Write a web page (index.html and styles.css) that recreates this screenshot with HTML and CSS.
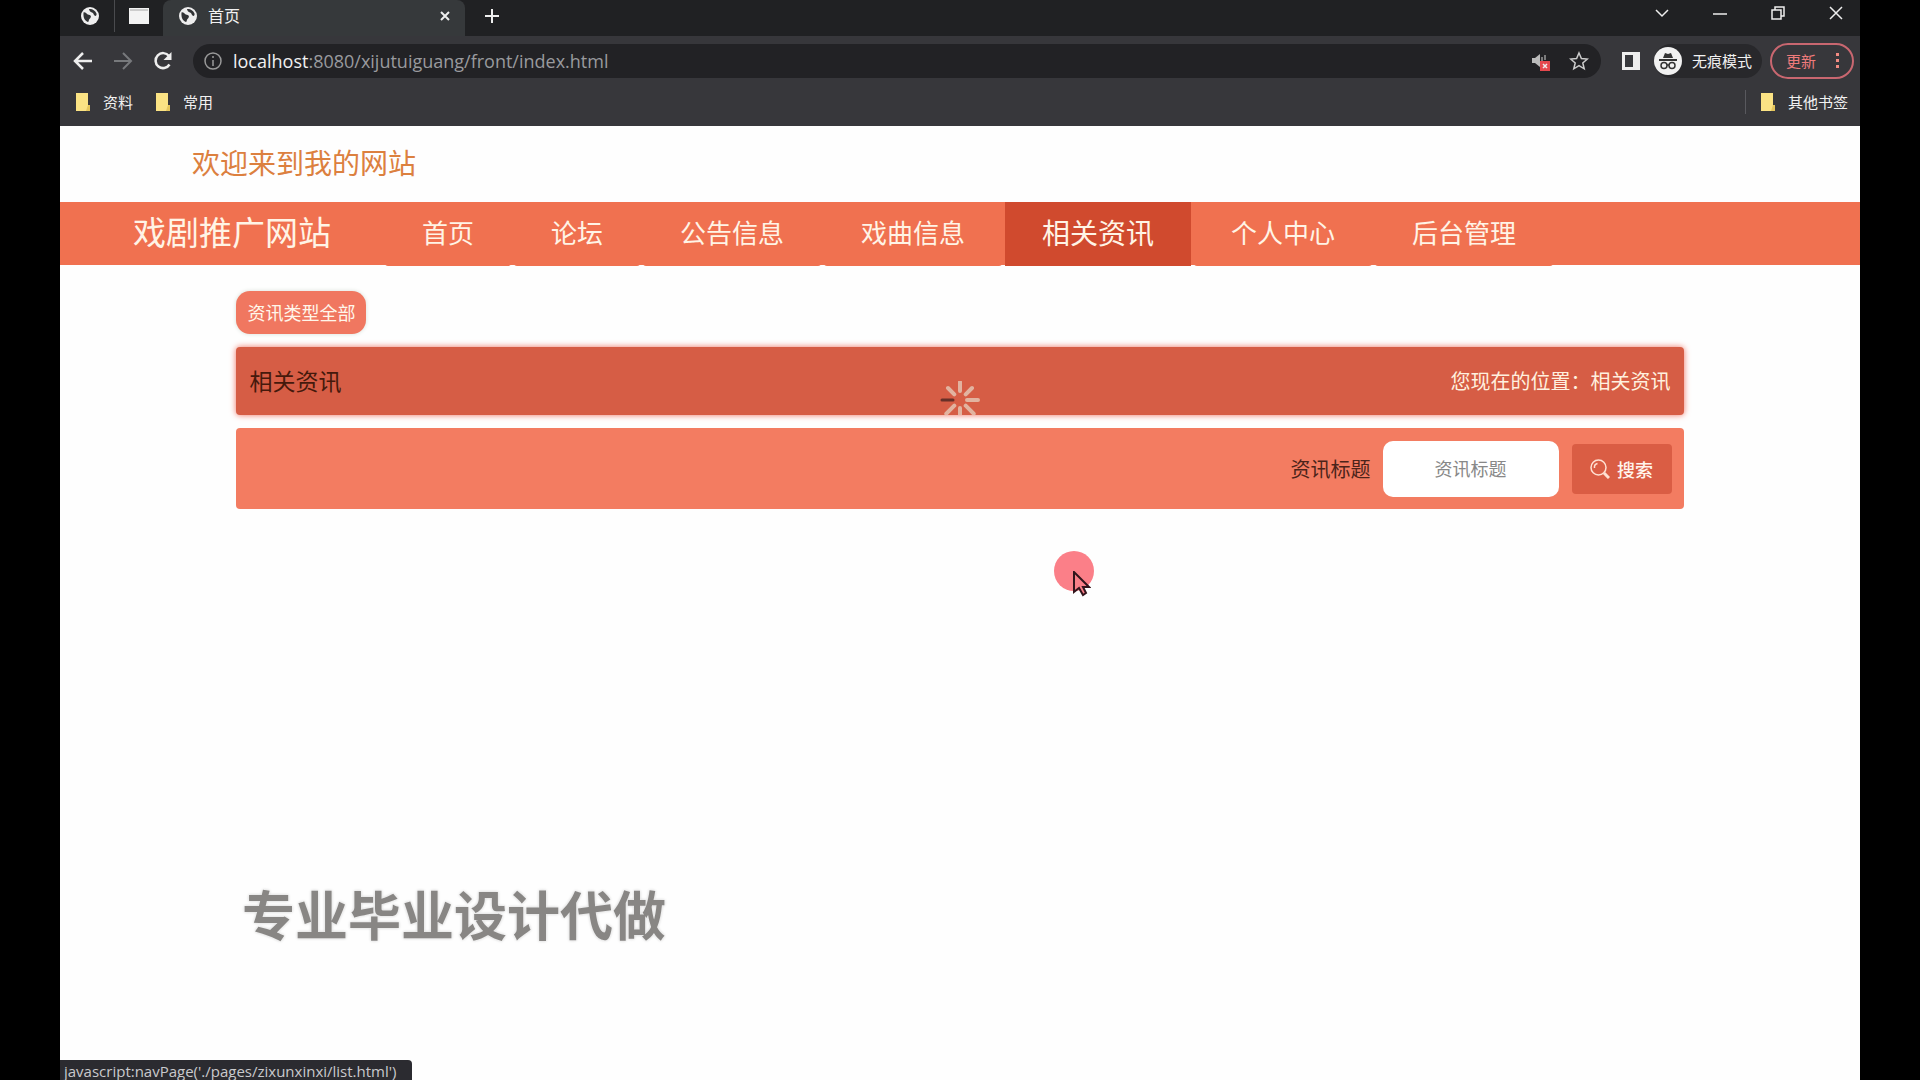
FILE: index.html
```html
<!DOCTYPE html>
<html lang="zh-CN">
<head>
<meta charset="utf-8">
<title>首页</title>
<link rel="stylesheet" href="styles.css">
</head>
<body>
<svg class="defs" aria-hidden="true">
  <symbol id="globe" viewBox="0 0 20 20"><circle cx="10" cy="10" r="9" fill="#eee"/><path d="M3.500 6.500c1.500-.5 2.500.5 3.500 1.500s2.500.5 3.500 1.500 0 2.500-1 3.500-.5 2.500-1.500 3C5 15 3 12 3.500 6.500zM9 3c3-.5 6 1 7.500 4.500.5 2-1 3-2 2s-1-2.500-2.500-3S9 4.500 9 3z" fill="#303234"/></symbol>
  <symbol id="folder" viewBox="0 0 16 18"><path d="M1 0h12v12h2v6H1z" fill="#fbe384"/><path d="M13 12h2v6h-4z" fill="#e5c65c"/></symbol>
</svg>
<div class="screen">
  <header class="browser">
    <div class="tabs">
      <button class="pinned" aria-label="固定标签页"><svg class="i20"><use href="#globe"/></svg></button>
      <button class="pinned second" aria-label="固定窗口"><svg class="i20" viewBox="0 0 20 20"><path d="M0 2h20v16H0z" fill="#f3f3f3"/><path d="M1 3h18v2H1z" fill="#ccc"/></svg></button>
      <div class="tab">
        <svg class="i20"><use href="#globe"/></svg><span>首页</span>
        <button class="close" aria-label="关闭标签页"><svg class="i12" viewBox="0 0 12 12"><path d="M2 2l8 8M10 2l-8 8" class="line"/></svg></button>
      </div>
      <button class="new" aria-label="新标签页"><svg class="i16" viewBox="0 0 16 16"><path d="M8 1v14M1 8h14" class="line"/></svg></button>
      <div class="window-controls">
        <button aria-label="搜索标签页"><svg class="i16" viewBox="0 0 16 16"><path d="M2 5l6 6 6-6" class="line thin"/></svg></button>
        <button aria-label="最小化"><svg class="i16" viewBox="0 0 16 16"><path d="M1 9h14" class="line thin"/></svg></button>
        <button aria-label="还原"><svg class="i16" viewBox="0 0 16 16"><path d="M2 5h9v9H2zM5 5V2h9v9h-3" class="line thin"/></svg></button>
        <button aria-label="关闭"><svg class="i16" viewBox="0 0 16 16"><path d="M2 2l12 12M14 2L2 14" class="line thin"/></svg></button>
      </div>
    </div>
    <div class="toolbar">
      <button aria-label="后退"><svg class="i20" viewBox="0 0 20 20"><path d="M19 10H3M10 2L2 10l8 8" class="line bold"/></svg></button>
      <button aria-label="前进"><svg class="i20" viewBox="0 0 20 20"><path d="M1 10h16M10 2l8 8-8 8" class="line dim"/></svg></button>
      <button aria-label="刷新"><svg class="i20" viewBox="0 0 20 20"><path d="M16.500 13.500A7.500 7.500 0 1 1 16 5" class="line bold"/><path d="M18.500 1v8h-8z" fill="#eee"/></svg></button>
      <div class="address">
        <svg class="i20" viewBox="0 0 20 20"><circle cx="10" cy="10" r="8" class="line gray"/><path d="M10 9v6M10 5v2" class="line gray"/></svg>
        <span class="url"><b>localhost</b>:8080/xijutuiguang/front/index.html</span>
        <button aria-label="已静音"><svg class="i20" viewBox="0 0 20 20"><path d="M1 7h3l5-4v13l-5-4H1z" fill="#bbb"/><path d="M11 6v4M14 4v5" stroke="#999" stroke-width="1.500"/><path d="M9 10h10v10H9z" fill="#e5484d"/><path d="M12 13l4 4M16 13l-4 4" class="line thin"/></svg></button>
        <button aria-label="收藏"><svg class="i20" viewBox="0 0 20 20"><path d="M10 2l2.400 5.500 6 .5-4.600 4 1.400 5.800L10 14.700l-5.200 3.100L6.200 12 1.600 8l6-.5z" class="line star"/></svg></button>
      </div>
      <button class="panel" aria-label="侧边栏"><svg class="i20" viewBox="0 0 20 20"><path d="M1 1h18v18H1z" fill="#eee"/><path d="M4 4h8v12H4z" fill="#37383c"/></svg></button>
      <div class="incognito"><svg class="i28" viewBox="0 0 28 28"><circle cx="14" cy="14" r="14" fill="#f1f1f1"/><path d="M9 11l2-5 3 1 3-1 2 5zM5 12h18v2H5z" fill="#333"/><circle cx="10" cy="18.500" r="3" class="glass"/><circle cx="18" cy="18.500" r="3" class="glass"/><path d="M13 18h2" class="glass"/></svg><span>无痕模式</span></div>
      <button class="update"><span>更新</span><svg class="i20" viewBox="0 0 20 20"><path d="M10 2h3v3h-3zM10 8h3v3h-3zM10 14h3v3h-3z" fill="#f28b82"/></svg></button>
    </div>
    <nav class="bookmarks" aria-label="书签">
      <a href="#"><svg class="folder"><use href="#folder"/></svg>资料</a>
      <a href="#"><svg class="folder"><use href="#folder"/></svg>常用</a>
      <a href="#" class="other"><svg class="folder"><use href="#folder"/></svg>其他书签</a>
    </nav>
  </header>

  <div class="welcome">欢迎来到我的网站</div>
  <nav class="site-nav" aria-label="主导航">
    <a href="#" class="brand">戏剧推广网站</a>
    <ul>
      <li><a href="#">首页</a></li>
      <li><a href="#">论坛</a></li>
      <li><a href="#">公告信息</a></li>
      <li><a href="#">戏曲信息</a></li>
      <li><a href="#" class="active">相关资讯</a></li>
      <li><a href="#">个人中心</a></li>
      <li><a href="#">后台管理</a></li>
    </ul>
  </nav>
  <main>
    <button class="category">资讯类型全部</button>
    <section class="title-bar">
      <h1>相关资讯</h1>
      <p>您现在的位置：相关资讯</p>
      <svg class="spinner" viewBox="0 0 40 34"><path d="M20 1v9M25.700 13.300l6.300-6.300M27 19h11M25.700 24.700l8 8M20 27v8M14.300 24.700l-8 8M14.300 13.300L8 7" class="ray"/><path d="M2 19h11" class="ray dark"/></svg>
    </section>
    <form class="search">
      <label for="title">资讯标题</label>
      <input id="title" type="text" placeholder="资讯标题">
      <button type="button"><svg class="i20" viewBox="0 0 20 20"><circle cx="8.500" cy="8.500" r="7.500" class="lens"/><path d="M4.500 9a4 4 0 0 1 3-4.500" class="lens"/><path d="M14 14l5 5" class="lens handle"/></svg>搜索</button>
    </form>
  </main>
  <div class="watermark">专业毕业设计代做</div>
  <div class="click"></div>
  <svg class="cursor" viewBox="0 0 18 26"><path d="M1 1v20l5-4 4 7 3-2-3-6h6z" fill="#fa7f89" stroke="#33151c" stroke-width="2"/></svg>
  <div class="status">javascript:navPage('./pages/zixunxinxi/list.html')</div>
</div>
</body>
</html>
```
FILE: styles.css
```css
* { box-sizing: border-box; }
body {
  margin: 0;
  padding: 0 3.125%;
  background: #000;
  font-family: "Open Sans", "Noto Sans CJK SC", sans-serif;
}
button { padding: 0; border: 0; background: none; color: inherit; font: inherit; }
a { color: inherit; text-decoration: none; }
svg { display: block; flex: none; }
.defs { position: absolute; width: 0; height: 0; }
.i12 { width: 12px; height: 12px; }
.i16 { width: 16px; height: 16px; }
.i20 { width: 20px; height: 20px; }
.i28 { width: 28px; height: 28px; }
.folder { width: 16px; height: 18px; }
.line { fill: none; stroke: #eee; stroke-width: 2; }
.thin { stroke-width: 1.5; }
.bold { stroke-width: 2.5; }
.dim { stroke: #77797c; }
.gray { stroke: #999; stroke-width: 1.5; }
.star { stroke: #ccc; stroke-width: 1.5; }
.glass { fill: none; stroke: #333; stroke-width: 1.5; }

.screen {
  position: relative;
  height: 100vh;
  overflow: hidden;
  background: #fefefe;
}

/* Browser window */
.browser { background: #37373b; color: #f1f1f1; font-size: 16px; line-height: 24px; }
.tabs { display: flex; align-items: stretch; height: 36px; padding-bottom: 4px; background: #202123; }
.pinned { display: flex; align-items: center; padding-left: 20px; width: 55px; border-right: 1px solid #4a4b4e; }
.pinned.second { padding-left: 14px; width: 48px; border: 0; }
.tab {
  display: flex;
  align-items: center;
  gap: 10px;
  width: 302px;
  margin-bottom: -4px;
  padding: 0 14px 4px 15px;
  border-radius: 8px 8px 0 0;
  background: #36393b;
}
.tab .close { margin-left: auto; }
.new { margin-left: 19px; }
.window-controls { display: flex; align-items: flex-start; gap: 42px; margin-left: auto; padding: 5px 16px 0 0; }
.toolbar { display: flex; align-items: center; height: 50px; padding: 0 6px 0 13px; }
.toolbar > button:nth-child(-n+3) { margin-right: 20px; }
.address {
  display: flex;
  align-items: center;
  flex: 1;
  height: 34px;
  margin-right: 20px;
  padding: 0 12px 0 10px;
  border-radius: 17px;
  background: #222225;
}
.url { flex: 1; margin-left: 10px; color: #999a9e; font-size: 18px; }
.url b { color: #f1f1f1; font-weight: 400; }
.address button + button { margin-left: 18px; }
.incognito {
  display: flex;
  align-items: center;
  gap: 10px;
  height: 34px;
  margin: 0 8px 0 13px;
  padding-right: 10px;
  border-radius: 17px;
  background: #28282b;
  font-size: 15px;
}
.update {
  display: flex;
  align-items: center;
  justify-content: space-between;
  width: 84px;
  height: 36px;
  padding: 0 6px 0 14px;
  border: 2px solid #c96770;
  border-radius: 18px;
  color: #ee7b7b;
  font-size: 15px;
}
.bookmarks { display: flex; align-items: center; gap: 22px; height: 40px; padding: 0 12px 8px 15px; font-size: 15px; }
.bookmarks a { display: flex; align-items: center; gap: 12px; }
.bookmarks .other { margin-left: auto; padding-left: 14px; border-left: 1px solid #59595e; }

/* Site header */
.welcome { height: 76px; padding-left: 132px; color: #dc803f; font-size: 28px; line-height: 74px; }
.site-nav { display: flex; height: 63px; padding-left: 73px; background: #f07150; color: #fff4e6; line-height: 62px; }
.brand { width: 252px; font-size: 33px; }
.site-nav ul { display: flex; gap: 3px; margin: 0; padding: 0; list-style: none; }
.site-nav li a { display: block; height: 64px; padding: 0 37px; border-radius: 0 0 3px 3px; background: #f07150; font-size: 26px; }
.site-nav li .active { border-radius: 0; background: #d04a2e; font-size: 28px; }

/* Content */
main { display: flex; flex-direction: column; gap: 13px; width: 80.4%; margin: 0 auto; padding-top: 26px; }
.category {
  align-self: flex-start;
  height: 43px;
  padding: 0 11px 2px;
  border-radius: 14px;
  background: #f07760;
  box-shadow: 0 0 4px #d8dfd8;
  color: #fff6ea;
  font-size: 18px;
}
.title-bar {
  position: relative;
  display: flex;
  align-items: center;
  justify-content: space-between;
  height: 68px;
  padding: 0 13px 2px;
  border-radius: 4px;
  background: #d65d45;
  box-shadow: 0 0 6px #f07160;
}
.title-bar h1 { margin: 0; color: #45190c; font-size: 23px; font-weight: 400; }
.title-bar p { margin: 0; color: #fff0df; font-size: 20px; }
.spinner { position: absolute; left: 50%; bottom: 0; width: 40px; height: 34px; margin-left: -20px; }
.ray { fill: none; stroke: #e2b3a0; stroke-width: 4; stroke-linecap: round; }
.ray.dark { stroke: #673028; stroke-width: 3; }
.search {
  display: flex;
  align-items: center;
  justify-content: flex-end;
  height: 81px;
  padding-right: 12px;
  border-radius: 4px;
  background: #f37c61;
}
.search label { color: #4c241a; font-size: 20px; }
.search input {
  width: 176px;
  height: 56px;
  margin: 0 13px 0 12px;
  border: 0;
  border-radius: 10px;
  background: #fff;
  font: inherit;
  font-size: 18px;
  text-align: center;
}
.search input::placeholder { color: #888; }
.search button {
  display: flex;
  align-items: center;
  justify-content: center;
  gap: 7px;
  width: 100px;
  height: 50px;
  border-radius: 4px;
  background: #da5d44;
  color: #fff4ed;
  font-size: 18px;
  font-weight: 500;
}
.lens { fill: none; stroke: #ffe0d2; stroke-width: 1.5; }
.handle { stroke-width: 3; }

/* Overlays */
.watermark {
  position: absolute;
  left: 182px;
  bottom: 124px;
  color: #888684;
  font-size: 53px;
  font-weight: 700;
  line-height: 80px;
  text-shadow: 0 0 2px #fff, 0 0 3px #bbb;
}
.click { position: absolute; left: 994px; top: 551px; width: 40px; height: 40px; border-radius: 50%; background: #fb7f88; }
.cursor { position: absolute; left: 1013px; top: 571px; width: 18px; height: 26px; }
.status {
  position: absolute;
  left: 0;
  bottom: 0;
  height: 20px;
  padding: 0 16px 0 4px;
  border-radius: 0 4px 0 0;
  background: #2b2b30;
  color: #c9c9cc;
  font-size: 15px;
  line-height: 22px;
  white-space: nowrap;
}
```
